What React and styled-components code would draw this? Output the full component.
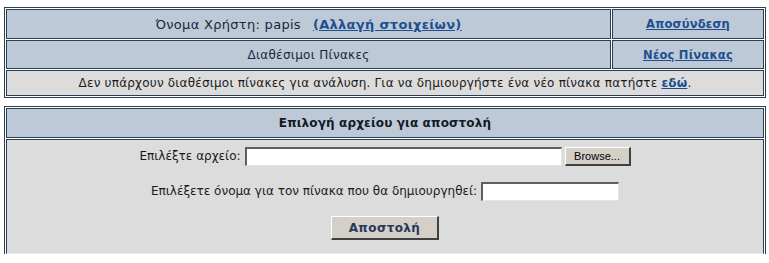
import React from "react";
import styled, { createGlobalStyle } from "styled-components";

const Global = createGlobalStyle`
  html, body { margin: 0; padding: 0; background: #ffffff; }
  body { font-family: "DejaVu Sans", Verdana, sans-serif; font-size: 12px; }
`;

const Page = styled.div`
  padding: 7px 3px 0 4px;
  display: flex;
  flex-direction: column;
  gap: 8px;
`;

const Table = styled.div`
  display: grid;
  grid-template-columns: ${(p) => p.$cols || "1fr"};
  gap: 1px;
  padding: ${(p) => (p.$open ? "1px 1px 0" : "1px")};
  border: 1px solid #2c3e52;
  border-bottom-width: ${(p) => (p.$open ? 0 : 1)}px;
  background: #ffffff;
`;

const Cell = styled.div`
  border: 1px solid #2c3e52;
  background: ${(p) => (p.$tone === "gray" ? "#dcdcdc" : "#bdc9d7")};
  color: ${(p) => (p.$strong ? "#111a26" : "#18283d")};
  font-weight: ${(p) => (p.$strong ? "bold" : "normal")};
  font-size: ${(p) => p.$size || 12}px;
  letter-spacing: ${(p) => (p.$strong ? "0.15px" : "0.3px")};
  height: ${(p) => p.$h}px;
  box-sizing: border-box;
  display: flex;
  align-items: center;
  justify-content: center;
  grid-column: ${(p) => (p.$span ? "1 / -1" : "auto")};
  white-space: nowrap;
`;

const Note = styled(Cell)`
  color: #1a1a1a;
  letter-spacing: 0.2px;
`;

const Link = styled.a`
  color: #1d4f8f;
  font-weight: bold;
  font-size: ${(p) => p.$size || 11.5}px;
  letter-spacing: ${(p) => p.$ls || 0.2}px;
  text-decoration: underline;
  cursor: pointer;
`;

const Gap = styled.span`
  display: inline-block;
  width: ${(p) => p.$w}px;
`;

const FormCell = styled.div`
  grid-column: 1 / -1;
  border: 1px solid #2c3e52;
  border-bottom: 1px solid #ececec;
  background: #dcdcdc;
  height: 115px;
  box-sizing: border-box;
  display: flex;
  flex-direction: column;
  align-items: center;
  padding-top: 6px;
  color: #1a1a1a;
`;

const Line = styled.div`
  display: flex;
  align-items: center;
  gap: ${(p) => p.$gap || 4}px;
  height: 20px;
  margin-bottom: ${(p) => p.$mb || 0}px;
`;

const TextInput = styled.div`
  width: ${(p) => p.$w}px;
  height: 19px;
  box-sizing: border-box;
  background: #ffffff;
  border-style: solid;
  border-width: 2px 1px 1px 2px;
  border-color: #5f5f5f #e4e4e4 #e4e4e4 #5f5f5f;
`;

const WinButton = styled.div`
  box-sizing: border-box;
  width: ${(p) => p.$w}px;
  height: ${(p) => p.$h}px;
  background: #d4d0c8;
  border-style: solid;
  border-width: 1px 2px 2px 1px;
  border-color: #ffffff #404040 #404040 #ffffff;
  display: flex;
  align-items: center;
  justify-content: center;
  font-family: ${(p) => (p.$big ? '"DejaVu Sans", Verdana, sans-serif' : '"Liberation Sans", Arial, sans-serif')};
  font-size: ${(p) => (p.$big ? 12 : 11)}px;
  font-weight: ${(p) => (p.$big ? "bold" : "normal")};
  letter-spacing: ${(p) => (p.$big ? "0.4px" : "0")};
  color: ${(p) => (p.$big ? "#25375a" : "#000000")};
`;

export default function App() {
  return (
    <>
      <Global />
      <Page>
        <Table $cols="1fr 152px">
          <Cell $h={30} $size={13}>
            Όνομα Χρήστη: papis<Gap $w={12} />
            <Link $size={13} $ls={0.3}>(Αλλαγή στοιχείων)</Link>
          </Cell>
          <Cell $h={30}>
            <Link>Αποσύνδεση</Link>
          </Cell>
          <Cell $h={29}>Διαθέσιμοι Πίνακες</Cell>
          <Cell $h={29}>
            <Link>Νέος Πίνακας</Link>
          </Cell>
          <Note $tone="gray" $span $h={26}>
            Δεν υπάρχουν διαθέσιμοι πίνακες για ανάλυση. Για να δημιουργήστε ένα νέο πίνακα πατήστε&nbsp;
            <Link $size={12}>εδώ</Link>.
          </Note>
        </Table>
        <Table $open>
          <Cell $h={30} $strong>Επιλογή αρχείου για αποστολή</Cell>
          <FormCell>
            <Line $gap={4} $mb={15}>
              Επιλέξτε αρχείο:
              <Line $gap={3}>
                <TextInput $w={317} />
                <WinButton $w={66} $h={19}>Browse...</WinButton>
              </Line>
            </Line>
            <Line $gap={4} $mb={15}>
              Επιλέξετε όνομα για τον πίνακα που θα δημιουργηθεί:
              <TextInput $w={138} />
            </Line>
            <WinButton $big $w={108} $h={24}>Αποστολή</WinButton>
          </FormCell>
        </Table>
      </Page>
    </>
  );
}
